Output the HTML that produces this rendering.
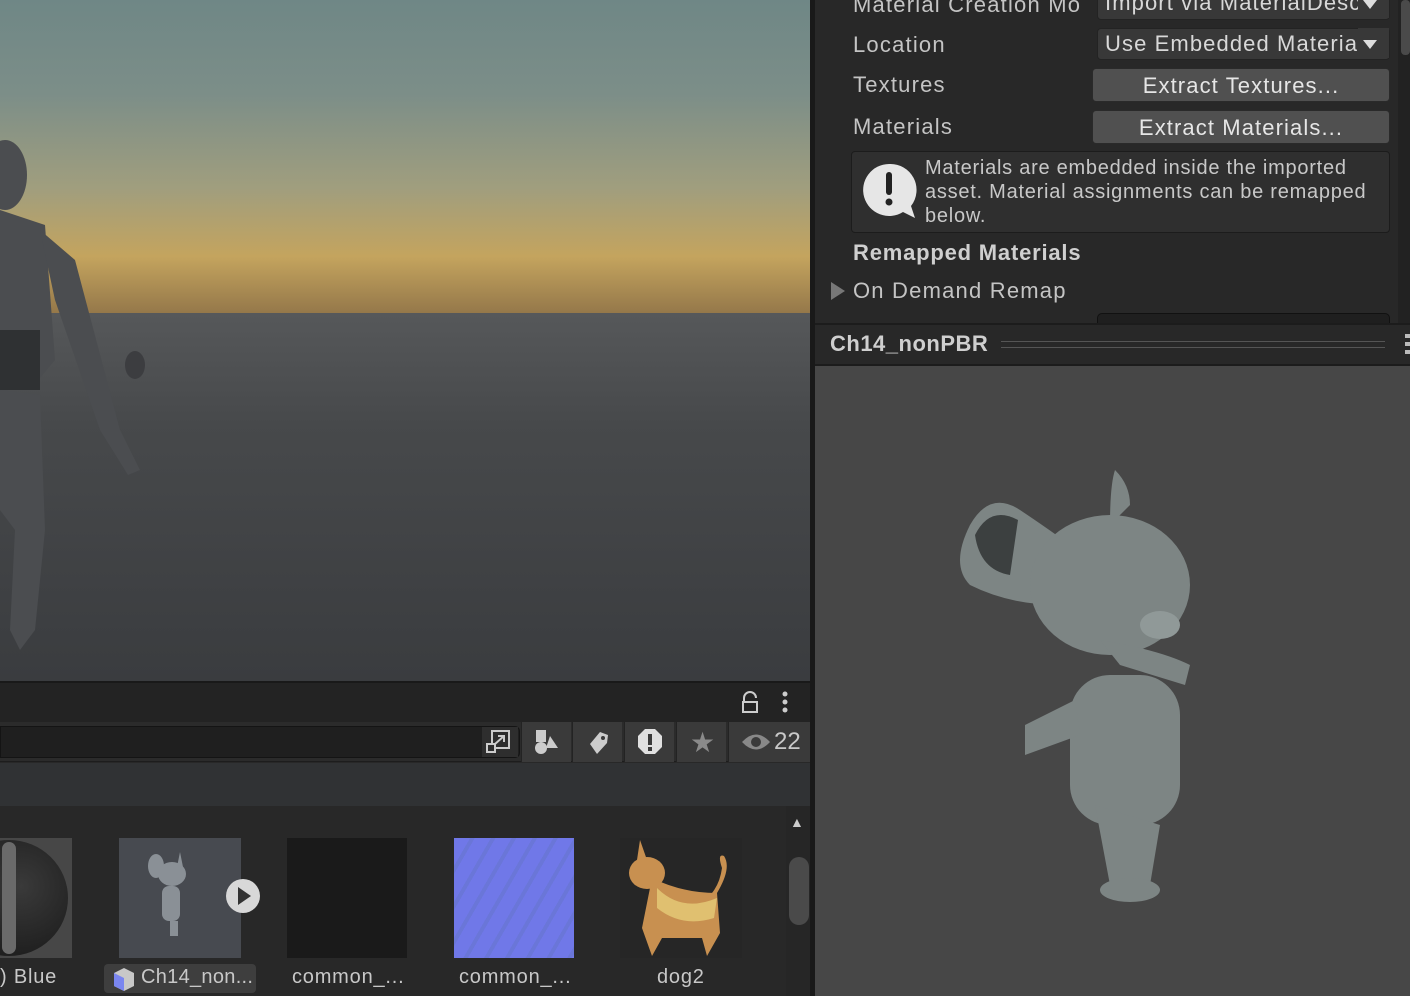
<!DOCTYPE html>
<html><head><style>
*{margin:0;padding:0;box-sizing:border-box}
body{width:1410px;height:996px;overflow:hidden;background:#282828;font-family:"Liberation Sans",sans-serif;position:relative}
.a{position:absolute}
.lbl{color:#c4c4c4;font-size:22px;letter-spacing:1.2px}
.fld{background:#383838;border:1px solid #232323;border-radius:4px;color:#d8d8d8;font-size:22px;letter-spacing:1.1px;padding-left:7px;white-space:nowrap;overflow:hidden}
.btn{background:#505050;border:1px solid #2a2a2a;border-radius:4px;color:#e6e6e6;font-size:22px;letter-spacing:1.1px;text-align:center}
.tb{background:#3a3a3a;top:722px;height:40px;width:50px;border-left:1px solid #232323}
.name{color:#c8c8c8;font-size:20px;top:966px;letter-spacing:0.8px}
</style></head><body>
<!-- scene -->
<div class="a" style="left:0;top:0;width:810px;height:313px;background:linear-gradient(#6f8786 0%,#7c8e88 30%,#a09e7e 60%,#c4a45e 82%,#95784a 100%)"></div>
<div class="a" style="left:0;top:313px;width:810px;height:368px;background:linear-gradient(#56585a 0%,#47494b 30%,#3a3c3f 100%)"></div>
<svg class="a" style="left:0;top:130px" width="160" height="540">
<g fill="#4b4d50">
<ellipse cx="5" cy="45" rx="22" ry="35"/>
<path d="M0 80 L45 95 L55 230 L30 260 L0 260Z"/>
<path d="M40 100 L75 130 L120 300 L140 340 L128 345 L100 300 L55 170Z"/>
<path d="M0 260 L40 265 L45 400 L35 500 L20 520 L10 500 L15 400 L0 380Z"/>
</g>
<ellipse cx="135" cy="235" rx="10" ry="14" fill="#3c3d40"/>
<rect x="0" y="200" width="40" height="60" fill="#2f3133"/>
</svg>
<div class="a" style="left:810px;top:0;width:5px;height:996px;background:#191919"></div>
<!-- bottom panel -->
<div class="a" style="left:0;top:681px;width:810px;height:41px;background:#232323;border-top:2px solid #191919"></div>
<svg class="a" style="left:741px;top:690px" width="52" height="26"><path d="M3 12v-4a6 6 0 0 1 12 0" stroke="#ccc" stroke-width="2" fill="none"/><rect x="2" y="12" width="14" height="10" stroke="#ccc" stroke-width="2" fill="none"/><circle cx="44" cy="4" r="2.5" fill="#ccc"/><circle cx="44" cy="12" r="2.5" fill="#ccc"/><circle cx="44" cy="20" r="2.5" fill="#ccc"/></svg>
<div class="a" style="left:0;top:722px;width:810px;height:40px;background:#2b2b2b;border-bottom:1px solid #1d1d1d"></div>
<div class="a" style="left:0;top:726px;width:520px;height:32px;background:#1f1f1f;border:1px solid #141414;border-radius:0 5px 5px 0"></div>
<div class="a" style="left:482px;top:727px;width:36px;height:30px;background:#2e2e2e"></div>
<svg class="a" style="left:484px;top:728px" width="30" height="28"><rect x="8" y="3" width="17" height="17" fill="none" stroke="#ccc" stroke-width="2"/><rect x="3" y="16" width="8" height="8" fill="#2e2e2e" stroke="#ccc" stroke-width="2"/><path d="M11 16 L20 8 M14 8h6v6" stroke="#ccc" stroke-width="2" fill="none"/></svg>
<div class="a tb" style="left:521px"></div><div class="a tb" style="left:572px"></div><div class="a tb" style="left:624px"></div><div class="a tb" style="left:676px"></div><div class="a tb" style="left:728px;width:82px"></div>
<svg class="a" style="left:533px;top:728px" width="30" height="28"><rect x="3" y="2" width="10" height="12" fill="#ccc"/><circle cx="8" cy="20" r="6" fill="#ccc"/><path d="M17 8 L25 20 L13 20Z" fill="#ccc"/></svg>
<svg class="a" style="left:585px;top:728px" width="28" height="28"><path d="M5 16 L15 4 L23 7 L22 15 L12 26Z" fill="#ccc"/><circle cx="18" cy="10" r="2" fill="#3a3a3a"/></svg>
<svg class="a" style="left:636px;top:728px" width="28" height="28"><path d="M9 1h10l7 7v11l-7 7H9l-7-7V8Z" fill="#e0e0e0"/><rect x="12" y="6" width="4" height="11" fill="#3a3a3a"/><rect x="12" y="19" width="4" height="4" fill="#3a3a3a"/></svg>
<div class="a" style="left:690px;top:726px;color:#8a8a8a;font-size:28px">★</div>
<svg class="a" style="left:740px;top:731px" width="32" height="22"><path d="M2 11 Q16 -4 30 11 Q16 26 2 11Z" fill="#888"/><circle cx="16" cy="11" r="5" fill="#3a3a3a"/></svg>
<div class="a" style="left:774px;top:728px;color:#c8c8c8;font-size:24px">22</div>
<div class="a" style="left:0;top:763px;width:810px;height:43px;background:#303234"></div>
<div class="a" style="left:0;top:806px;width:810px;height:190px;background:#282828"></div>
<div class="a" style="left:786px;top:806px;width:24px;height:190px;background:#262626"></div>
<div class="a" style="left:790px;top:814px;color:#ccc;font-size:14px">▲</div>
<div class="a" style="left:789px;top:857px;width:20px;height:68px;background:#4a4a4a;border-radius:10px"></div>
<!-- thumbnails -->
<div class="a" style="left:0;top:838px;width:72px;height:120px;background:#474747"></div>
<div class="a" style="left:-50px;top:840px;width:118px;height:116px;border-radius:50%;background:radial-gradient(circle at 60% 40%,#3a3a3a,#141414)"></div>
<div class="a" style="left:2px;top:842px;width:14px;height:112px;border-radius:7px;background:#6a6a6a"></div>
<div class="a name" style="left:0">) Blue</div>
<div class="a" style="left:119px;top:838px;width:122px;height:120px;background:#474a50"></div>
<svg class="a" style="left:140px;top:846px" width="60" height="95"><g fill="#8a9096"><ellipse cx="16" cy="20" rx="8" ry="12"/><ellipse cx="32" cy="28" rx="14" ry="12"/><rect x="22" y="40" width="18" height="35" rx="7"/><rect x="30" y="75" width="8" height="15"/><path d="M40 6l3 15-6 0Z"/></g></svg>
<div class="a" style="left:226px;top:879px;width:34px;height:34px;border-radius:50%;background:#d8d8d8"></div>
<div class="a" style="left:238px;top:887px;width:0;height:0;border-left:13px solid #333;border-top:9px solid transparent;border-bottom:9px solid transparent"></div>
<div class="a" style="left:104px;top:964px;width:152px;height:29px;background:#3e3e3e;border-radius:4px"></div>
<svg class="a" style="left:111px;top:966px" width="26" height="26"><path d="M3 7 L13 2 L23 7 L23 20 L13 25 L3 20Z" fill="#c8c8c8"/><path d="M3 7 L13 12 L13 25 L3 20Z" fill="#7a86f0"/></svg>
<div class="a name" style="left:141px;letter-spacing:0.3px">Ch14_non...</div>
<div class="a" style="left:287px;top:838px;width:120px;height:120px;background:#1a1a1a"></div>
<div class="a name" style="left:292px">common_...</div>
<div class="a" style="left:454px;top:838px;width:120px;height:120px;background:repeating-linear-gradient(120deg,#7078e8 0 14px,#6a76d8 14px 18px)"></div>
<div class="a name" style="left:459px">common_...</div>
<div class="a" style="left:620px;top:838px;width:122px;height:120px;background:#262626"></div>
<svg class="a" style="left:622px;top:838px" width="120" height="120"><g fill="#c89050"><ellipse cx="25" cy="35" rx="18" ry="16"/><path d="M30 40 Q60 55 95 55 L98 95 L85 118 L80 100 L40 100 L30 118 L20 90Z"/><path d="M95 55 Q110 30 102 18 Q95 15 100 30 Q98 45 90 55Z"/><path d="M15 22 L18 2 L25 22Z"/></g><g fill="#e0c070"><path d="M35 50 Q60 75 95 60 L92 80 Q60 90 35 70Z"/></g></svg>
<div class="a name" style="left:657px">dog2</div>
<!-- inspector -->
<div class="a" style="left:815px;top:0;width:595px;height:325px;background:#282828"></div>
<div class="a" style="left:1398px;top:0;width:12px;height:325px;background:#222"></div>
<div class="a" style="left:1401px;top:0;width:9px;height:55px;background:#4a4a4a;border-radius:4px"></div>
<div class="a lbl" style="left:853px;top:-8px">Material Creation Mo</div>
<div class="a fld" style="left:1097px;top:-12px;width:293px;height:32px;line-height:28px">Import via MaterialDesc</div>
<div class="a lbl" style="left:853px;top:32px">Location</div>
<div class="a fld" style="left:1097px;top:28px;width:293px;height:32px;line-height:30px">Use Embedded Material</div>
<div class="a" style="left:1358px;top:28px;width:31px;height:30px;background:#383838"></div>
<div class="a" style="left:1363px;top:40px;border-top:9px solid #ddd;border-left:7px solid transparent;border-right:7px solid transparent"></div>
<div class="a" style="left:1358px;top:-10px;width:31px;height:28px;background:#383838"></div>
<div class="a" style="left:1363px;top:0px;border-top:9px solid #ddd;border-left:7px solid transparent;border-right:7px solid transparent"></div>
<div class="a lbl" style="left:853px;top:72px">Textures</div>
<div class="a btn" style="left:1092px;top:68px;width:298px;height:34px;line-height:34px">Extract Textures...</div>
<div class="a lbl" style="left:853px;top:114px">Materials</div>
<div class="a btn" style="left:1092px;top:110px;width:298px;height:34px;line-height:34px">Extract Materials...</div>
<div class="a" style="left:851px;top:151px;width:539px;height:82px;background:#2f2f2f;border:1px solid #1c1c1c;border-radius:4px"></div>
<svg class="a" style="left:858px;top:160px" width="62" height="62"><path d="M31 4a26 26 0 1 0 14 48l12 6l-4 -12A26 26 0 0 0 31 4Z" fill="#e6e6e6"/><rect x="28" y="12" width="6" height="23" rx="3" fill="#222"/><circle cx="31" cy="42" r="3.5" fill="#222"/></svg>
<div class="a" style="left:925px;top:156px;color:#c8c8c8;font-size:20px;line-height:24px;width:465px;letter-spacing:0.75px">Materials are embedded inside the imported asset. Material assignments can be remapped below.</div>
<div class="a" style="left:853px;top:240px;color:#cfcfcf;font-size:22px;font-weight:bold;letter-spacing:0.8px">Remapped Materials</div>
<div class="a" style="left:831px;top:282px;border-left:14px solid #777;border-top:9px solid transparent;border-bottom:9px solid transparent"></div>
<div class="a lbl" style="left:853px;top:278px">On Demand Remap</div>
<div class="a" style="left:1097px;top:313px;width:293px;height:12px;background:#1f1f1f;border:1px solid #111;border-radius:5px 5px 0 0"></div>
<div class="a" style="left:815px;top:323px;width:595px;height:43px;background:#282828;border-top:2px solid #1c1c1c;border-bottom:2px solid #1c1c1c"></div>
<div class="a" style="left:830px;top:331px;color:#cfcfcf;font-size:22px;font-weight:bold;letter-spacing:0.5px">Ch14_nonPBR</div>
<div class="a" style="left:1001px;top:341px;width:384px;height:7px;border-top:1px solid #555;border-bottom:1px solid #555"></div>
<div class="a" style="left:1405px;top:334px;width:5px;height:22px;background:repeating-linear-gradient(#bbb 0 4px,transparent 4px 8px)"></div>
<div class="a" style="left:815px;top:366px;width:595px;height:630px;background:#474747"></div>
<svg class="a" style="left:950px;top:465px" width="280" height="450">
<g fill="#7d8584">
<path d="M20 60 Q40 25 70 45 Q100 65 120 80 L110 140 Q60 140 20 120 Q0 100 20 60Z"/>
<path d="M165 5 Q180 20 180 40 L160 60 Q160 20 165 5Z"/>
<ellipse cx="160" cy="120" rx="80" ry="70"/>
<path d="M150 175 Q210 185 240 200 L235 220 L170 200Z"/>
<rect x="120" y="210" width="110" height="150" rx="40"/>
<path d="M125 235 L75 260 L75 290 L130 270Z"/>
<path d="M145 340 L160 420 L200 420 L210 360Z"/>
<ellipse cx="180" cy="425" rx="30" ry="12"/>
</g>
<path d="M25 70 Q40 40 68 55 L60 110 Q30 105 25 70Z" fill="#3c4040"/>
<ellipse cx="210" cy="160" rx="20" ry="14" fill="#909998"/>
</svg>
</body></html>
